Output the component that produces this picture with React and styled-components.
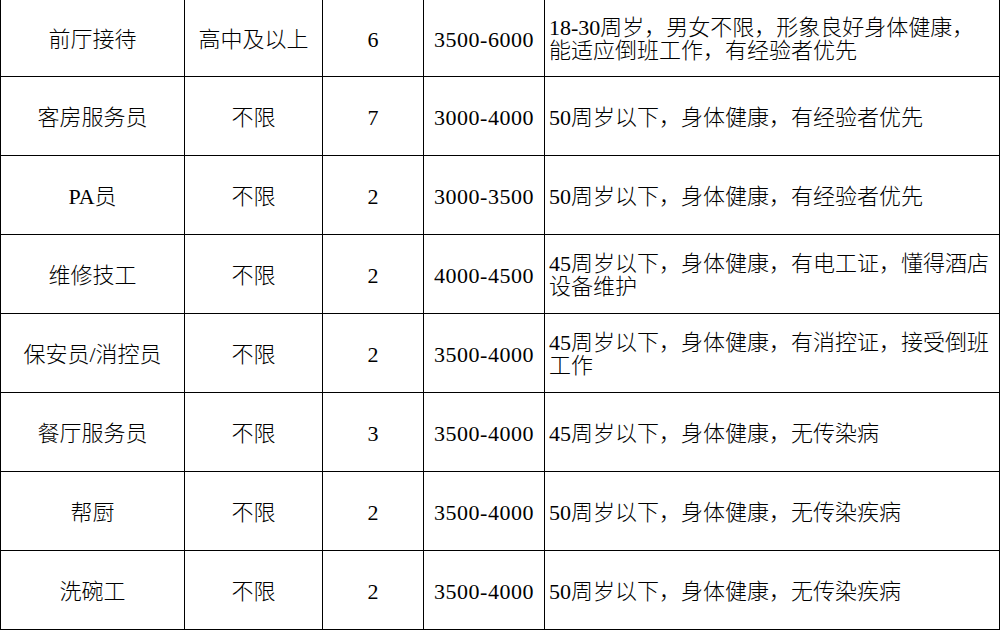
import React from "react";
import styled, { createGlobalStyle } from "styled-components";

const GlobalStyle = createGlobalStyle`
  html, body {
    margin: 0;
    padding: 0;
    background: #fff;
    overflow: hidden;
  }
`;

const Table = styled.div`
  display: grid;
  grid-template-columns: 184px 138px 101px 121px 455px;
  width: 1000px;
  border-left: 1px solid #000;
  box-sizing: border-box;
  font-family: "Liberation Serif", "Noto Sans CJK SC", serif;
  font-size: 22px;
  font-weight: 300;
  color: #000;
`;

const Cell = styled.div`
  box-sizing: border-box;
  height: ${(props) => (props.first ? "77px" : "79px")};
  border-right: 1px solid #000;
  border-bottom: 1px solid #000;
  display: flex;
  flex-direction: column;
  justify-content: center;
  align-items: ${(props) => (props.left ? "flex-start" : "center")};
  padding: ${(props) => (props.left ? "2px 0 0 4px" : "2px 0 0 0")};
  line-height: 23px;
  white-space: nowrap;
`;

const Num = styled.span`
  letter-spacing: 0.5px;
`;

const Line = styled.div``;

const rows = [
  ["前厅接待", "高中及以上", "6", "3500-6000", ["18-30周岁，男女不限，形象良好身体健康，", "能适应倒班工作，有经验者优先"]],
  ["客房服务员", "不限", "7", "3000-4000", ["50周岁以下，身体健康，有经验者优先"]],
  ["PA员", "不限", "2", "3000-3500", ["50周岁以下，身体健康，有经验者优先"]],
  ["维修技工", "不限", "2", "4000-4500", ["45周岁以下，身体健康，有电工证，懂得酒店", "设备维护"]],
  ["保安员/消控员", "不限", "2", "3500-4000", ["45周岁以下，身体健康，有消控证，接受倒班", "工作"]],
  ["餐厅服务员", "不限", "3", "3500-4000", ["45周岁以下，身体健康，无传染病"]],
  ["帮厨", "不限", "2", "3500-4000", ["50周岁以下，身体健康，无传染疾病"]],
  ["洗碗工", "不限", "2", "3500-4000", ["50周岁以下，身体健康，无传染疾病"]],
];

const App = () => {
  return (
    <>
      <GlobalStyle />
      <Table>
        {rows.map(([job, edu, count, pay, desc], i) => (
          <React.Fragment key={job}>
            <Cell first={i === 0}>{job}</Cell>
            <Cell first={i === 0}>{edu}</Cell>
            <Cell first={i === 0}>{count}</Cell>
            <Cell first={i === 0}><Num>{pay}</Num></Cell>
            <Cell first={i === 0} left>
              {desc.map((l) => (
                <Line key={l}>{l}</Line>
              ))}
            </Cell>
          </React.Fragment>
        ))}
      </Table>
    </>
  );
};

export default App;
